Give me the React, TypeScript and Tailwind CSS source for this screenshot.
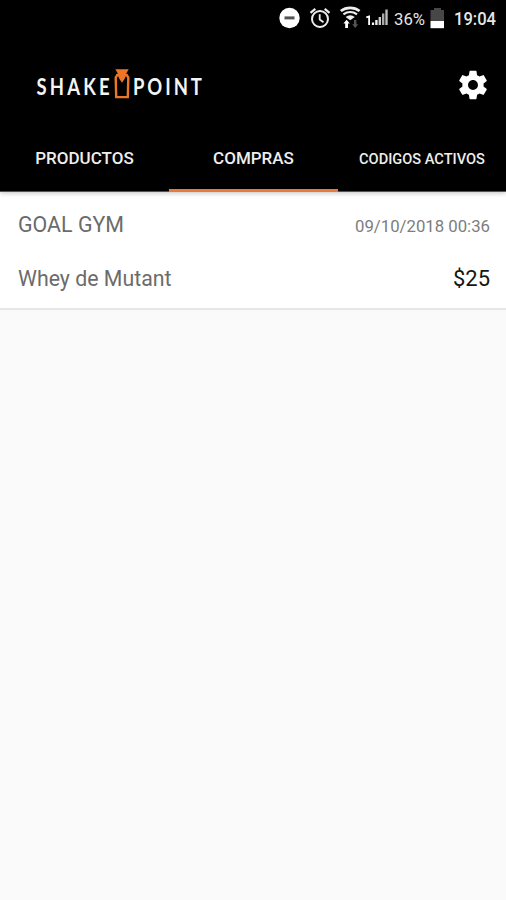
import type { ReactNode } from "react";
import clsx from "clsx";

interface Purchase {
  store: string;
  date: string;
  product: string;
  price: string;
}

const TABS = [
  { label: "PRODUCTOS", compact: false },
  { label: "COMPRAS", compact: false },
  { label: "CODIGOS ACTIVOS", compact: true },
];

const PURCHASES: Purchase[] = [
  { store: "GOAL GYM", date: "09/10/2018 00:36", product: "Whey de Mutant", price: "$25" },
];

// One-line text with a fixed advance, so the labels keep their width.
function Label({ children, width, size, className }: { children: ReactNode; width: number; size: number; className?: string }) {
  return (
    <svg width={width} height="30" className={clsx("block shrink-0 overflow-visible", className)} fill="currentColor">
      <text x="0" y="22" fontSize={size} textLength={width} lengthAdjust="spacingAndGlyphs">
        {children}
      </text>
    </svg>
  );
}

function StatusBar() {
  return (
    <div className="flex h-[37px] shrink-0 items-start pl-[279px] text-[#e6e6e6]">
      <svg width="110" height="37" className="shrink-0" fill="none">
        {/* do not disturb */}
        <circle cx="10.5" cy="18" r="10.2" fill="#fff" />
        <rect x="5.5" y="16.4" width="10" height="3" fill="#555" />
        {/* alarm */}
        <circle cx="41" cy="19" r="8" stroke="#eee" strokeWidth="2" />
        <path d="M40.7 14.3v5.2l3.8 2.8" stroke="#eee" strokeWidth="1.8" />
        <path d="M31.5 12.8l4.8-4M50.5 12.8l-4.8-4" stroke="#eee" strokeWidth="2.2" />
        {/* wifi with traffic arrows */}
        <path d="M61.8 11a15.5 15.5 0 0 1 18.8 0" stroke="#eee" strokeWidth="2.8" />
        <path d="M64.4 14.4a11.5 11.5 0 0 1 13.6 0" stroke="#eee" strokeWidth="2.2" />
        <path d="M66.6 16.9a7.6 7.6 0 0 1 9.2 0l-4.6 3.3z" fill="#eee" />
        <path d="M67.6 19.8l3.2 3.6h-1.8V28h-2.8v-4.6h-1.8z" fill="#fff" />
        <path d="M76.2 28l-3-3.8h1.8V20h2.4v4.2h1.8z" fill="#555" />
        {/* signal */}
        <path d="M87.3 17.3l2.8-.8V25" stroke="#fff" strokeWidth="1.8" />
        <path d="M94 25v-2.5" stroke="#fff" strokeWidth="2.2" />
        <path d="M97.4 25v-5" stroke="#eee" strokeWidth="2.4" />
        <path d="M100.8 25v-8" stroke="#ccc" strokeWidth="2.4" />
        <path d="M104.2 25V13.5" stroke="#aaa" strokeWidth="2.4" />
        <path d="M107.5 25V9.5" stroke="#bbb" strokeWidth="2.4" />
      </svg>
      <Label width={31} size={17} className="ml-[4.5px] mt-[3px]">36%</Label>
      <svg width="15" height="37" className="ml-[5px] shrink-0">
        <path d="M0.5 10h3.5V8h7v2h3v11H0.5z" fill="#474747" />
        <rect x="0.5" y="21" width="13.5" height="7.2" fill="#fff" />
      </svg>
      <Label width={42} size={17.5} className="ml-[9px] mt-[3px] font-medium">19:04</Label>
    </div>
  );
}

function Logo() {
  return (
    <svg width="170" height="36" viewBox="0 0 170 36" role="img" aria-label="SHAKE POINT">
      <g fill="#f4f4f4" fontFamily="Lato, sans-serif" fontWeight="700" fontSize="22">
        <text transform="translate(0.5 28.3) scale(0.84 1)" textLength="87" lengthAdjust="spacing">SHAKE</text>
        <text transform="translate(97 28.3) scale(0.84 1)" textLength="82" lengthAdjust="spacing">POINT</text>
      </g>
      {/* shaker bottle */}
      <path d="M79.3 2.2h13.4L90.2 6.5v2h-8.4v-2z" fill="#ec7526" />
      <path d="M81.3 8h9.4l1.6 2.6-.5 19.5H80.2l-.5-19.5z" fill="none" stroke="#ec7526" strokeWidth="2.4" />
      <path d="M81.5 7.5h9l-1.8 4.2-2.7 4-2.7-4z" fill="#ec7526" />
    </svg>
  );
}

function SettingsIcon() {
  return (
    <svg width="34" height="34" viewBox="0 0 24 24" fill="#fff">
      <path d="M19.43 12.98c.04-.32.07-.64.07-.98s-.03-.66-.07-.98l2.11-1.65c.19-.15.24-.42.12-.64l-2-3.46c-.12-.22-.39-.3-.61-.22l-2.49 1c-.52-.4-1.08-.73-1.69-.98l-.38-2.65C14.46 2.18 14.25 2 14 2h-4c-.25 0-.46.18-.49.42l-.38 2.65c-.61.25-1.17.59-1.69.98l-2.49-1c-.23-.09-.49 0-.61.22l-2 3.46c-.13.22-.07.49.12.64l2.11 1.65c-.04.32-.07.65-.07.98s.03.66.07.98l-2.11 1.65c-.19.15-.24.42-.12.64l2 3.46c.12.22.39.3.61.22l2.49-1c.52.4 1.08.73 1.69.98l.38 2.65c.03.24.24.42.49.42h4c.25 0 .46-.18.49-.42l.38-2.65c.61-.25 1.17-.59 1.69-.98l2.49 1c.23.09.49 0 .61-.22l2-3.46c.12-.22.07-.49-.12-.64l-2.11-1.65zM12 15.5c-1.93 0-3.5-1.57-3.5-3.5s1.57-3.5 3.5-3.5 3.5 1.57 3.5 3.5-1.57 3.5-3.5 3.5z" />
    </svg>
  );
}

function PurchaseCard({ store, date, product, price }: Purchase) {
  return (
    <div className="h-[118px] border-b-2 border-[#e6e6e6] bg-white pl-[18px] pr-4 pt-[18px]">
      <div className="flex justify-between">
        <Label width={106} size={21.5} className="text-[#6b6b6b]">{store}</Label>
        <Label width={135} size={17.2} className="text-[#7d7d7d]">{date}</Label>
      </div>
      <div className="mt-[24px] flex justify-between">
        <Label width={153.5} size={21.5} className="text-[#6b6b6b]">{product}</Label>
        <Label width={37} size={21.5} className="text-[#151515]">{price}</Label>
      </div>
    </div>
  );
}

export default function App() {
  const active = 1;

  return (
    <div className="flex h-[900px] w-[506px] flex-col overflow-hidden bg-[#fafafa] font-['Roboto',sans-serif]">
      <header className="z-10 flex h-[192px] shrink-0 flex-col border-b border-[#555] bg-black shadow-[0_1px_5px_rgba(0,0,0,0.25)]">
        <StatusBar />
        <div className="flex h-[95px] items-center justify-between pl-9 pr-4">
          <Logo />
          <button aria-label="Ajustes">
            <SettingsIcon />
          </button>
        </div>
        <nav className="grid flex-1 grid-cols-[169px_169px_168px]">
          {TABS.map((tab, i) => (
            <button
              key={tab.label}
              className={clsx(
                "-mb-px flex items-start justify-center border-b-[3px] pt-4 font-medium text-[#eee]",
                tab.compact ? "text-[14.6px] leading-[22px]" : "text-[17px] leading-[21px]",
                i === active ? "border-[#e77b3b]" : "border-transparent",
              )}
            >
              {tab.label}
            </button>
          ))}
        </nav>
      </header>
      <main className="flex-1">
        {PURCHASES.map((p) => (
          <PurchaseCard key={p.date} {...p} />
        ))}
      </main>
    </div>
  );
}
